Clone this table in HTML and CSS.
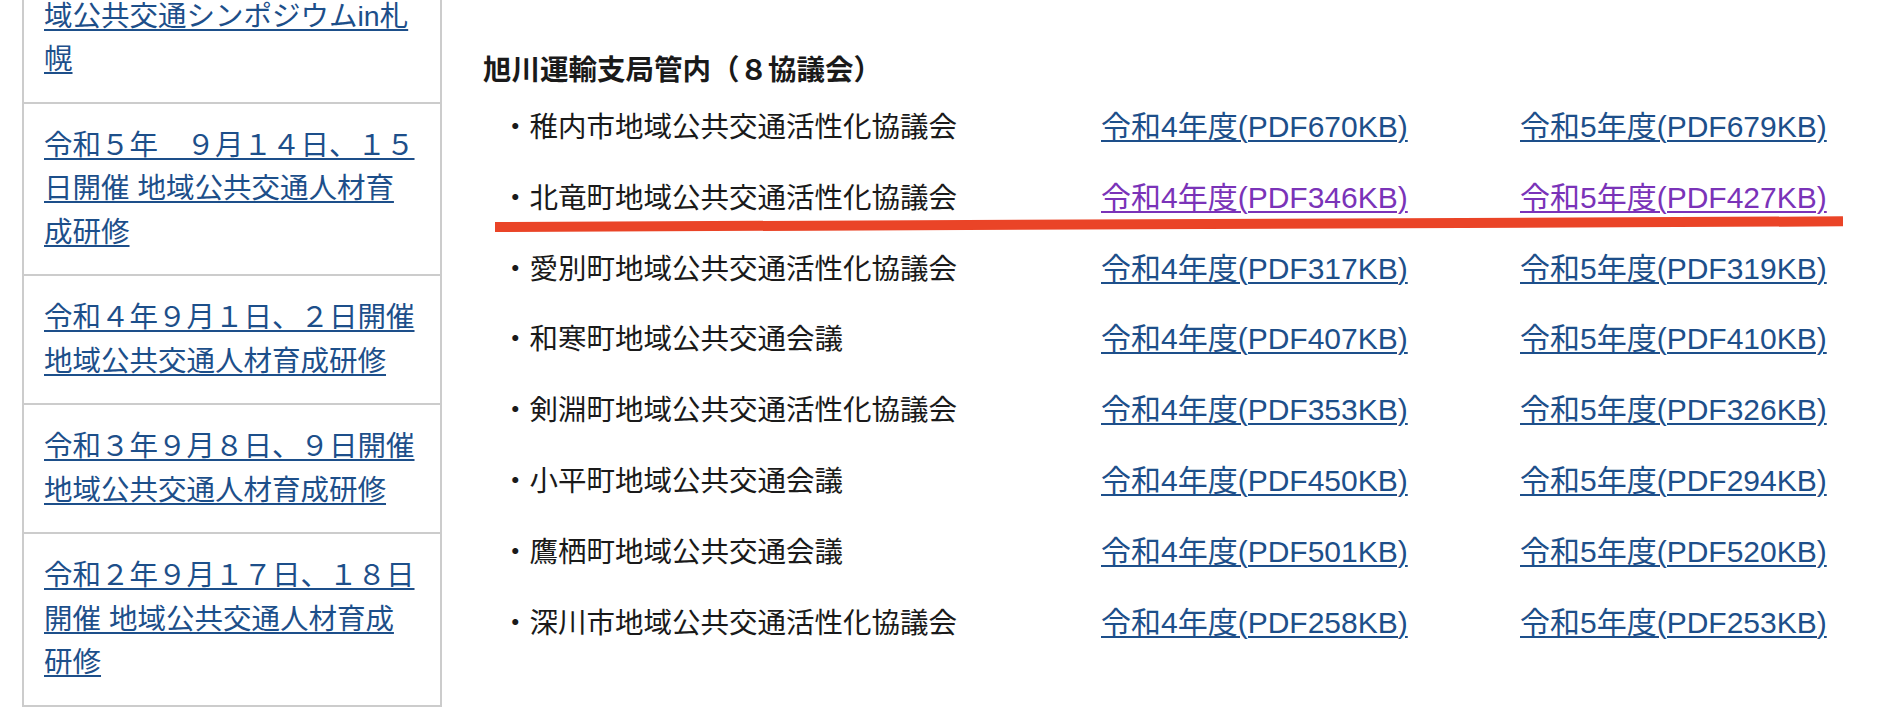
FILE: index.html
```html
<!DOCTYPE html>
<html lang="ja">
<head>
<meta charset="utf-8">
<title>旭川運輸支局管内</title>
<link rel="stylesheet" href="styles.css">
</head>
<body>
<div class="page">
  <nav class="sidebar">
    <ul class="side-list">
      <li class="side-item"><a href="#">令和５年開催 北海道地<br>域公共交通シンポジウムin札幌</a></li>
      <li class="side-item"><a href="#">令和５年　９月１４日、１５日開催 地域公共交通人材育成研修</a></li>
      <li class="side-item"><a href="#">令和４年９月１日、２日開催 地域公共交通人材育成研修</a></li>
      <li class="side-item"><a href="#">令和３年９月８日、９日開催 地域公共交通人材育成研修</a></li>
      <li class="side-item"><a href="#">令和２年９月１７日、１８日開催 地域公共交通人材育成研修</a></li>
    </ul>
  </nav>
  <main class="main">
    <h3 class="region-title">旭川運輸支局管内（８協議会）</h3>
    <div class="council-table">
      <div class="row"><span class="name">・稚内市地域公共交通活性化協議会</span><a class="doc" href="#">令和4年度(PDF670KB)</a><a class="doc" href="#">令和5年度(PDF679KB)</a></div>
      <div class="row"><span class="name">・北竜町地域公共交通活性化協議会</span><a class="doc visited" href="#">令和4年度(PDF346KB)</a><a class="doc visited" href="#">令和5年度(PDF427KB)</a></div>
      <div class="row"><span class="name">・愛別町地域公共交通活性化協議会</span><a class="doc" href="#">令和4年度(PDF317KB)</a><a class="doc" href="#">令和5年度(PDF319KB)</a></div>
      <div class="row"><span class="name">・和寒町地域公共交通会議</span><a class="doc" href="#">令和4年度(PDF407KB)</a><a class="doc" href="#">令和5年度(PDF410KB)</a></div>
      <div class="row"><span class="name">・剣淵町地域公共交通活性化協議会</span><a class="doc" href="#">令和4年度(PDF353KB)</a><a class="doc" href="#">令和5年度(PDF326KB)</a></div>
      <div class="row"><span class="name">・小平町地域公共交通会議</span><a class="doc" href="#">令和4年度(PDF450KB)</a><a class="doc" href="#">令和5年度(PDF294KB)</a></div>
      <div class="row"><span class="name">・鷹栖町地域公共交通会議</span><a class="doc" href="#">令和4年度(PDF501KB)</a><a class="doc" href="#">令和5年度(PDF520KB)</a></div>
      <div class="row"><span class="name">・深川市地域公共交通活性化協議会</span><a class="doc" href="#">令和4年度(PDF258KB)</a><a class="doc" href="#">令和5年度(PDF253KB)</a></div>
    </div>
  </main>
  <div class="annotation-line"></div>
</div>
</body>
</html>
```

FILE: styles.css
```css
html, body {
  margin: 0;
  padding: 0;
  background: #ffffff;
  overflow: hidden;
}

body {
  font-family: "Liberation Sans", "Noto Sans CJK JP", sans-serif;
  color: #222222;
}

.page {
  position: relative;
  display: flex;
  align-items: flex-start;
  width: 1880px;
  height: 708px;
  overflow: hidden;
}

.sidebar {
  width: 420px;
  margin-left: 22px;
  margin-top: -71px;
  flex: none;
}

.side-list {
  list-style: none;
  margin: 0;
  padding: 0;
  border-top: 2px solid #cccccc;
}

.side-item {
  border: 2px solid #cccccc;
  border-top: none;
  padding: 20px 19px 20px 20px;
  font-size: 28.5px;
  line-height: 43.5px;
}

.side-item a {
  color: #1d4f8a;
  text-decoration: underline;
  text-decoration-thickness: 2px;
  text-underline-offset: 3px;
}

.main {
  margin-left: 41px;
  flex: 1;
}

.region-title {
  margin: 49px 0 0 0;
  font-size: 28.5px;
  line-height: 43px;
  font-weight: bold;
  color: #1a1a1a;
}

.council-table {
  display: grid;
  grid-template-columns: 600px 419px auto;
  padding-left: 18px;
}

.row {
  display: contents;
}

.name,
.doc {
  height: 70.8px;
  line-height: 70.8px;
  white-space: nowrap;
}

.name {
  font-size: 28.5px;
  color: #1a1a1a;
}

.doc {
  font-size: 30px;
  color: #1d4f8a;
  text-decoration: underline;
  text-decoration-thickness: 2px;
  text-underline-offset: 3px;
}

.doc.visited {
  color: #7a33b8;
}

.annotation-line {
  position: absolute;
  left: 495px;
  top: 222px;
  width: 1348px;
  height: 10px;
  background: #ea4427;
  transform: rotate(-0.24deg);
  transform-origin: left center;
}
```
